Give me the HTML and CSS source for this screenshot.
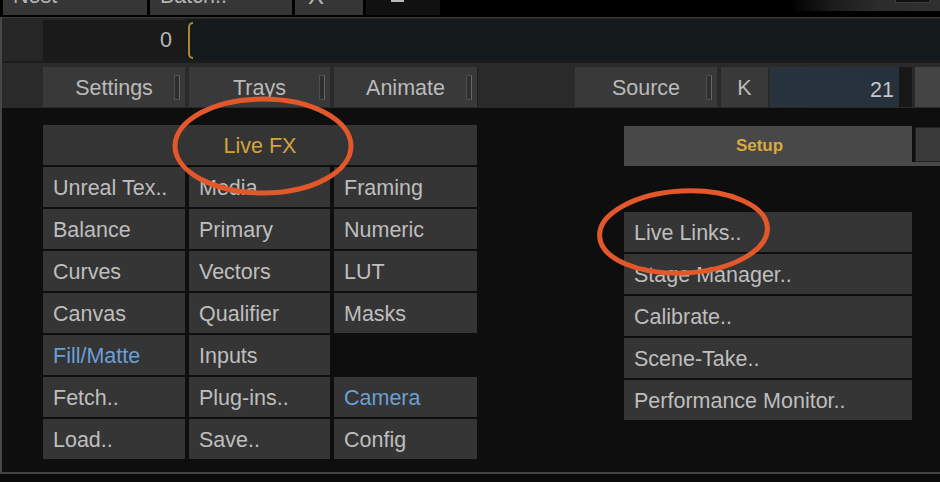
FILE: index.html
```html
<!DOCTYPE html>
<html>
<head>
<meta charset="utf-8">
<title>Live FX</title>
<link rel="stylesheet" href="styles.css">
</head>
<body>
<div class="app">
  <div class="topbar">
    <div class="tab"><span class="tab-label">Nest</span></div>
    <div class="tab"><span class="tab-label">Batch..</span></div>
    <div class="tab tab-x"><span class="tab-label">X</span></div>
    <div class="tab tab-min"><span class="min-bar"></span></div>
    <div class="topbar-fill"></div>
    <div class="corner"><span class="corner-bar"></span></div>
  </div>
  <div class="workspace">
    <div class="framebar">
      <div class="frame-spacer"></div>
      <div class="frame-input">0</div>
      <div class="timeline"><span class="bracket"></span></div>
    </div>
    <div class="menubar">
      <div class="menu-spacer"></div>
      <div class="mbtn w142">Settings<span class="mark"></span></div>
      <div class="mbtn w141">Trays<span class="mark"></span></div>
      <div class="mbtn w143">Animate<span class="mark"></span></div>
      <div class="menu-gap"></div>
      <div class="mbtn w142">Source<span class="mark"></span></div>
      <div class="mbtn kbtn">K</div>
      <div class="kvalue">21</div>
      <div class="kblack"></div>
      <div class="kend"></div>
    </div>
    <div class="main">
      <div class="grid">
        <div class="cell header gold">Live FX</div>
        <div class="cell">Unreal Tex..</div>
        <div class="cell">Media</div>
        <div class="cell">Framing</div>
        <div class="cell">Balance</div>
        <div class="cell">Primary</div>
        <div class="cell">Numeric</div>
        <div class="cell">Curves</div>
        <div class="cell">Vectors</div>
        <div class="cell">LUT</div>
        <div class="cell">Canvas</div>
        <div class="cell">Qualifier</div>
        <div class="cell">Masks</div>
        <div class="cell blue">Fill/Matte</div>
        <div class="cell">Inputs</div>
        <div class="cell empty"></div>
        <div class="cell">Fetch..</div>
        <div class="cell">Plug-ins..</div>
        <div class="cell blue">Camera</div>
        <div class="cell">Load..</div>
        <div class="cell">Save..</div>
        <div class="cell">Config</div>
      </div>
      <div class="side">
        <div class="tabrow">
          <div class="setup">Setup</div>
          <div class="tab2"></div>
        </div>
        <div class="list">
          <div class="item">Live Links..</div>
          <div class="item">Stage Manager..</div>
          <div class="item">Calibrate..</div>
          <div class="item">Scene-Take..</div>
          <div class="item">Performance Monitor..</div>
        </div>
      </div>
    </div>
  </div>
  <div class="footer"></div>
  <svg class="annotations" width="940" height="482" viewBox="0 0 940 482">
    <ellipse cx="263" cy="146" rx="88" ry="47" fill="none" stroke="#e2582a" stroke-width="5"/>
    <ellipse cx="683.5" cy="232" rx="84" ry="41" fill="none" stroke="#e2582a" stroke-width="5" transform="rotate(-3 683.5 232)"/>
  </svg>
</div>
</body>
</html>
```

FILE: styles.css
```css
html, body {
  margin: 0;
  padding: 0;
  background: #0e0e0e;
}

body {
  width: 940px;
  height: 482px;
  overflow: hidden;
  font-family: "Liberation Sans", Arial, sans-serif;
  font-size: 21.5px;
  color: #bdbdbd;
}

.app {
  position: relative;
  width: 940px;
  height: 482px;
  overflow: hidden;
}

/* ---------- top tabs ---------- */
.topbar {
  display: flex;
  align-items: flex-start;
  height: 17px;
  background: #000;
  padding-left: 3px;
  box-sizing: border-box;
}

.tab {
  height: 15px;
  background: #363636;
  margin-right: 3px;
  overflow: hidden;
  box-sizing: border-box;
  padding-left: 10px;
  flex: none;
}

.tab:nth-child(1) { width: 144px; }
.tab:nth-child(2) { width: 142px; }

.tab-label {
  display: block;
  line-height: 21px;
  margin-top: -14px;
  color: #b4b4b4;
  white-space: nowrap;
}

.tab-x {
  width: 68px;
  padding-left: 13px;
}

.tab-x .tab-label {
  font-size: 24px;
  margin-top: -15px;
}

.tab-min {
  width: 74px;
  background: #111;
  padding-left: 25px;
}

.min-bar {
  display: block;
  width: 13px;
  height: 2px;
  background: #b8b8b8;
}

.topbar-fill {
  flex: 1;
}

.corner {
  width: 150px;
  height: 11px;
  background: linear-gradient(to right, #000 0%, #1d1d1d 30%, #2c2c2c 60%, #303030 100%);
  display: flex;
  justify-content: flex-end;
  padding-right: 10px;
  box-sizing: border-box;
}

.corner-bar {
  width: 33px;
  height: 2px;
  background: #111;
  border: 1px solid #3c3c3c;
  border-top: none;
}

/* ---------- workspace ---------- */
.workspace {
  border-left: 2px solid #474747;
}

.framebar {
  display: flex;
  align-items: flex-start;
  height: 46px;
  box-sizing: border-box;
  background: #262626;
  border-top: 1px solid #3a3a3a;
  border-bottom: 2px solid #1c1c1c;
}

.frame-spacer {
  width: 41px;
  flex: none;
}

.frame-input {
  width: 143px;
  height: 41px;
  margin-top: 2px;
  background: #1a1a1a;
  flex: none;
  text-align: right;
  line-height: 41px;
  padding-right: 14px;
  box-sizing: border-box;
  color: #b8b8b8;
}

.timeline {
  flex: 1;
  height: 42px;
  margin-top: 1px;
  background: #151b1d;
  display: flex;
  align-items: center;
  padding-left: 2px;
}

.bracket {
  width: 5px;
  height: 37px;
  border: 2.5px solid #a9862f;
  border-right: none;
  border-radius: 5px 0 0 5px;
  box-sizing: border-box;
}

.menubar {
  display: flex;
  align-items: flex-start;
  height: 45px;
  box-sizing: border-box;
  padding-top: 4px;
  background: #2a2a2a;
}

.menu-spacer {
  width: 41px;
  flex: none;
}

.mbtn {
  position: relative;
  height: 40px;
  background: #393939;
  display: flex;
  align-items: center;
  justify-content: center;
  padding-top: 3px;
  box-sizing: border-box;
  margin-right: 4px;
  flex: none;
  color: #bababa;
}

.w142 { width: 142px; }
.w141 { width: 141px; }
.w143 { width: 143px; margin-right: 0; }

.mark {
  position: absolute;
  right: 5px;
  top: 8px;
  width: 6px;
  height: 25px;
  box-sizing: border-box;
  border: 1px solid #505050;
  border-right: 1.5px solid #666;
  background: #2e2e2e;
}

.menu-gap {
  width: 98px;
  height: 40px;
  flex: none;
  border-left: 1px solid #202020;
  box-sizing: border-box;
}

.kbtn {
  width: 47px;
  margin-right: 2px;
}

.kvalue {
  width: 129px;
  height: 40px;
  flex: none;
  background: linear-gradient(to right, #28333e, #26313b);
  text-align: right;
  line-height: 40px;
  padding-top: 3px;
  padding-right: 5px;
  box-sizing: border-box;
  color: #c6c6c6;
}

.kblack {
  width: 13px;
  height: 40px;
  flex: none;
  background: #171717;
  margin-right: 3px;
}

.kend {
  flex: 1;
  height: 40px;
  background: #444;
}

/* ---------- main area ---------- */
.main {
  display: flex;
  align-items: flex-start;
  height: 364px;
  box-sizing: border-box;
  padding-top: 17px;
  background: #0e0e0e;
}

.grid {
  margin-left: 41px;
  display: grid;
  grid-template-columns: 142px 141px 143px;
  grid-auto-rows: 40px;
  column-gap: 4px;
  row-gap: 2px;
  flex: none;
}

.cell {
  background: #353535;
  display: flex;
  align-items: center;
  padding-left: 10px;
  padding-top: 2px;
  box-sizing: border-box;
  white-space: nowrap;
  overflow: hidden;
  color: #bebebe;
}

.cell.header {
  grid-column: 1 / 4;
  justify-content: center;
  padding-left: 0;
  padding-top: 3px;
  background: #343434;
}

.cell.empty {
  background: transparent;
}

.gold {
  color: #d4a337;
}

.blue {
  color: #6b9fd6;
}

.side {
  margin-left: 147px;
  padding-top: 1px;
  flex: 1;
}

.tabrow {
  display: flex;
  align-items: flex-start;
  height: 40px;
  background: linear-gradient(to bottom, transparent 36px, #484848 36px);
}

.setup {
  width: 288px;
  height: 40px;
  background: #484848;
  display: flex;
  align-items: center;
  justify-content: center;
  padding-right: 17px;
  box-sizing: border-box;
  font-size: 17px;
  font-weight: bold;
  color: #d9aa3b;
  flex: none;
}

.tab2 {
  flex: 1;
  margin-left: 3px;
  margin-top: 1px;
  height: 35px;
  background: #3a3a3a;
  border: 1px solid #222;
  border-right: none;
  box-sizing: border-box;
}

.list {
  margin-top: 46px;
  width: 288px;
  display: flex;
  flex-direction: column;
  gap: 2px;
}

.item {
  height: 40px;
  background: #353535;
  display: flex;
  align-items: center;
  padding-left: 10px;
  padding-top: 2px;
  box-sizing: border-box;
  white-space: nowrap;
  color: #bebebe;
}

/* ---------- footer ---------- */
.footer {
  height: 10px;
  border-top: 2px solid #444;
  background: #0b0b0b;
}

/* ---------- annotation overlay ---------- */
.annotations {
  position: absolute;
  left: 0;
  top: 0;
  pointer-events: none;
}
```
